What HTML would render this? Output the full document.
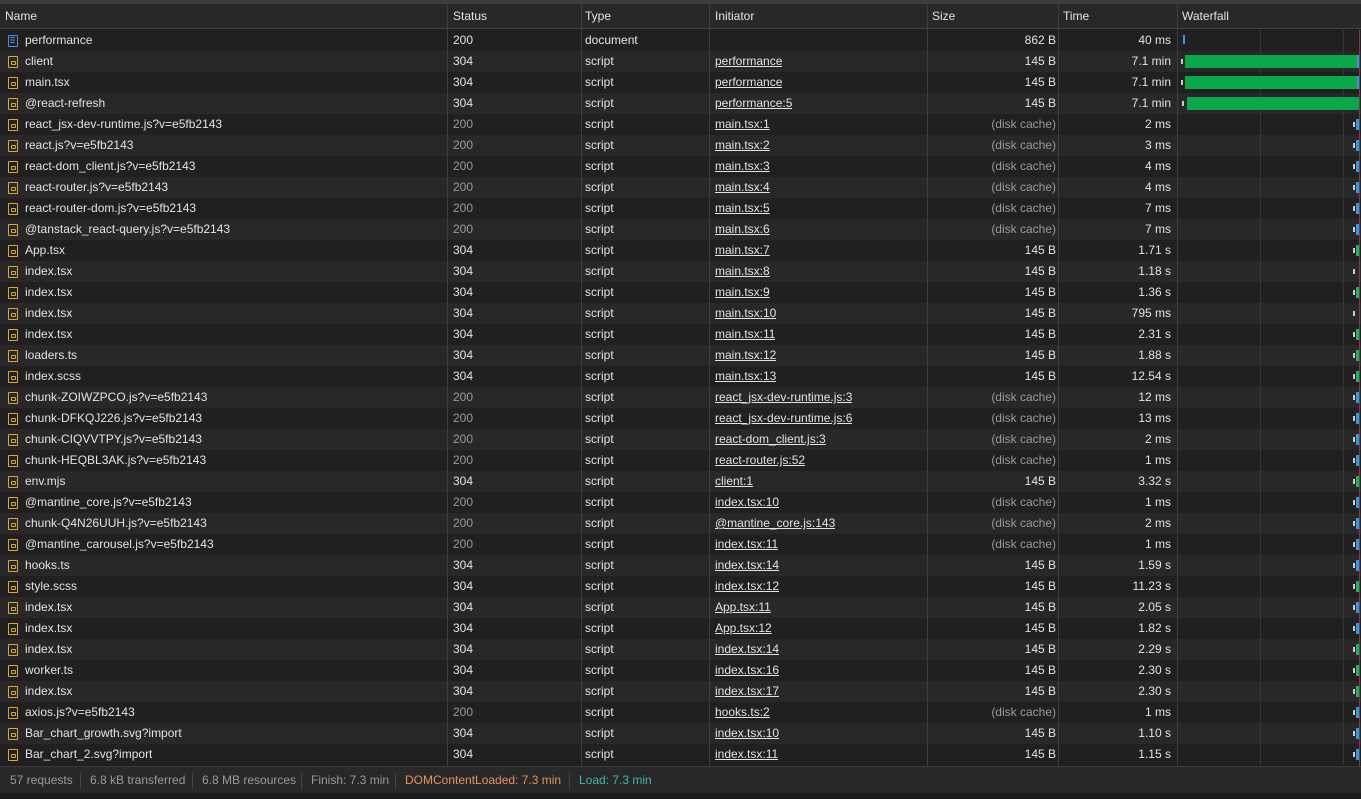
<!DOCTYPE html>
<html><head><meta charset="utf-8"><style>
*{margin:0;padding:0;box-sizing:border-box}
body{width:1361px;height:799px;background:#1b1b1b;font-family:"Liberation Sans",sans-serif;font-size:12px;color:#e3e3e3;overflow:hidden;position:relative}
.top{position:absolute;left:0;top:0;width:1361px;height:4px;background:#3c3c3c}
.hdr{position:absolute;left:0;top:4px;width:1361px;height:25px;background:#282828;border-bottom:1px solid #444}
.r{position:absolute;left:0;width:1361px;height:21px;line-height:21px;white-space:nowrap}
.r:nth-child(even){background:#282828}
.r:nth-child(odd){background:#202020}
.c{position:absolute;top:0;height:100%;overflow:hidden}
.n{left:25px}.s{left:453px}.t{left:585px}.i{left:715px;text-decoration:underline}.z{right:305px;text-align:right}.m{right:190px;text-align:right}
.g{color:#9a9a9a}
.ic{position:absolute;left:8px;top:5px;width:10px;height:12px;border:1.5px solid #d8a93a;border-radius:1px}
.ic:after{content:"";position:absolute;left:2px;top:4px;width:3px;height:2px;border:1px solid #d8a93a;border-radius:1px}
.doc{border-color:#4c8fe0}
.doc:after{border:none;left:1px;top:1px;width:5px;height:6px;background:repeating-linear-gradient(#4c8fe0 0 1px,transparent 1px 2.5px)}
.vl{position:absolute;top:4px;width:1px;height:762px;background:#3d3d3d}
.gl{position:absolute;top:0;width:1px;height:21px;background:#363636}
.tick{position:absolute;left:1353px;top:8px;width:2px;height:5px;background:#ccc}
.bar{position:absolute;left:1356px;top:5px;width:3px;height:11px;background:#2a9ce0}
.gb{background:#1db35a}
.H{position:absolute;top:4px;height:25px;line-height:25px;color:#e3e3e3}
.foot{position:absolute;left:0;top:766px;width:1361px;height:27px;background:#282828;border-top:1px solid #3d3d3d;line-height:27px;color:#9a9a9a}
.foot span{position:absolute;top:0}
.fs{position:absolute;top:6px;width:1px;height:16px;background:#444}
.r:before{content:"";position:absolute;left:1260px;top:0;width:1px;height:21px;background:#363636}
.r:after{content:"";position:absolute;left:1343px;top:0;width:1px;height:21px;background:#363636}
.r>*{z-index:1}
</style></head><body>
<div class="top"></div>
<div class="hdr"></div>
<div class="H" style="left:5px">Name</div>
<div class="H" style="left:453px">Status</div>
<div class="H" style="left:585px">Type</div>
<div class="H" style="left:715px">Initiator</div>
<div class="H" style="left:932px">Size</div>
<div class="H" style="left:1063px">Time</div>
<div class="H" style="left:1182px">Waterfall</div>
<div id="rows" style="position:absolute;left:0;top:30px">
<div class="r" style="top:0"><div class="ic doc"></div><div class="c n">performance</div><div class="c s">200</div><div class="c t">document</div><div class="c i"></div><div class="c z">862 B</div><div class="c m">40 ms</div><div style="position:absolute;left:1183px;top:5px;width:2px;height:9px;background:#2a9ce0"></div></div>
<div class="r" style="top:21px"><div class="ic"></div><div class="c n">client</div><div class="c s">304</div><div class="c t">script</div><div class="c i">performance</div><div class="c z">145 B</div><div class="c m">7.1 min</div><div style="position:absolute;left:1181px;top:8px;width:2px;height:5px;background:#ccc"></div><div style="position:absolute;left:1185px;top:4px;width:172px;height:13px;background:#0aa84a"></div><div style="position:absolute;left:1357px;top:4px;width:2px;height:13px;background:#2a9ce0"></div></div>
<div class="r" style="top:42px"><div class="ic"></div><div class="c n">main.tsx</div><div class="c s">304</div><div class="c t">script</div><div class="c i">performance</div><div class="c z">145 B</div><div class="c m">7.1 min</div><div style="position:absolute;left:1181px;top:8px;width:2px;height:5px;background:#ccc"></div><div style="position:absolute;left:1185px;top:4px;width:172px;height:13px;background:#0aa84a"></div><div style="position:absolute;left:1357px;top:4px;width:2px;height:13px;background:#2a9ce0"></div></div>
<div class="r" style="top:63px"><div class="ic"></div><div class="c n">@react-refresh</div><div class="c s">304</div><div class="c t">script</div><div class="c i">performance:5</div><div class="c z">145 B</div><div class="c m">7.1 min</div><div style="position:absolute;left:1182px;top:8px;width:2px;height:5px;background:#ccc"></div><div style="position:absolute;left:1187px;top:4px;width:172px;height:13px;background:#0aa84a"></div></div>
<div class="r" style="top:84px"><div class="ic"></div><div class="c n">react_jsx-dev-runtime.js?v=e5fb2143</div><div class="c s g">200</div><div class="c t">script</div><div class="c i">main.tsx:1</div><div class="c z g">(disk cache)</div><div class="c m">2 ms</div><div class="tick"></div><div class="bar"></div></div>
<div class="r" style="top:105px"><div class="ic"></div><div class="c n">react.js?v=e5fb2143</div><div class="c s g">200</div><div class="c t">script</div><div class="c i">main.tsx:2</div><div class="c z g">(disk cache)</div><div class="c m">3 ms</div><div class="tick"></div><div class="bar"></div></div>
<div class="r" style="top:126px"><div class="ic"></div><div class="c n">react-dom_client.js?v=e5fb2143</div><div class="c s g">200</div><div class="c t">script</div><div class="c i">main.tsx:3</div><div class="c z g">(disk cache)</div><div class="c m">4 ms</div><div class="tick"></div><div class="bar"></div></div>
<div class="r" style="top:147px"><div class="ic"></div><div class="c n">react-router.js?v=e5fb2143</div><div class="c s g">200</div><div class="c t">script</div><div class="c i">main.tsx:4</div><div class="c z g">(disk cache)</div><div class="c m">4 ms</div><div class="tick"></div><div class="bar"></div></div>
<div class="r" style="top:168px"><div class="ic"></div><div class="c n">react-router-dom.js?v=e5fb2143</div><div class="c s g">200</div><div class="c t">script</div><div class="c i">main.tsx:5</div><div class="c z g">(disk cache)</div><div class="c m">7 ms</div><div class="tick"></div><div class="bar"></div></div>
<div class="r" style="top:189px"><div class="ic"></div><div class="c n">@tanstack_react-query.js?v=e5fb2143</div><div class="c s g">200</div><div class="c t">script</div><div class="c i">main.tsx:6</div><div class="c z g">(disk cache)</div><div class="c m">7 ms</div><div class="tick"></div><div class="bar"></div></div>
<div class="r" style="top:210px"><div class="ic"></div><div class="c n">App.tsx</div><div class="c s">304</div><div class="c t">script</div><div class="c i">main.tsx:7</div><div class="c z">145 B</div><div class="c m">1.71 s</div><div class="tick"></div><div class="bar gb"></div></div>
<div class="r" style="top:231px"><div class="ic"></div><div class="c n">index.tsx</div><div class="c s">304</div><div class="c t">script</div><div class="c i">main.tsx:8</div><div class="c z">145 B</div><div class="c m">1.18 s</div><div class="tick"></div></div>
<div class="r" style="top:252px"><div class="ic"></div><div class="c n">index.tsx</div><div class="c s">304</div><div class="c t">script</div><div class="c i">main.tsx:9</div><div class="c z">145 B</div><div class="c m">1.36 s</div><div class="tick"></div><div class="bar gb"></div></div>
<div class="r" style="top:273px"><div class="ic"></div><div class="c n">index.tsx</div><div class="c s">304</div><div class="c t">script</div><div class="c i">main.tsx:10</div><div class="c z">145 B</div><div class="c m">795 ms</div><div class="tick"></div></div>
<div class="r" style="top:294px"><div class="ic"></div><div class="c n">index.tsx</div><div class="c s">304</div><div class="c t">script</div><div class="c i">main.tsx:11</div><div class="c z">145 B</div><div class="c m">2.31 s</div><div class="tick"></div><div class="bar gb"></div></div>
<div class="r" style="top:315px"><div class="ic"></div><div class="c n">loaders.ts</div><div class="c s">304</div><div class="c t">script</div><div class="c i">main.tsx:12</div><div class="c z">145 B</div><div class="c m">1.88 s</div><div class="tick"></div><div class="bar gb"></div></div>
<div class="r" style="top:336px"><div class="ic"></div><div class="c n">index.scss</div><div class="c s">304</div><div class="c t">script</div><div class="c i">main.tsx:13</div><div class="c z">145 B</div><div class="c m">12.54 s</div><div class="tick"></div><div class="bar gb"></div></div>
<div class="r" style="top:357px"><div class="ic"></div><div class="c n">chunk-ZOIWZPCO.js?v=e5fb2143</div><div class="c s g">200</div><div class="c t">script</div><div class="c i">react_jsx-dev-runtime.js:3</div><div class="c z g">(disk cache)</div><div class="c m">12 ms</div><div class="tick"></div><div class="bar"></div></div>
<div class="r" style="top:378px"><div class="ic"></div><div class="c n">chunk-DFKQJ226.js?v=e5fb2143</div><div class="c s g">200</div><div class="c t">script</div><div class="c i">react_jsx-dev-runtime.js:6</div><div class="c z g">(disk cache)</div><div class="c m">13 ms</div><div class="tick"></div><div class="bar"></div></div>
<div class="r" style="top:399px"><div class="ic"></div><div class="c n">chunk-CIQVVTPY.js?v=e5fb2143</div><div class="c s g">200</div><div class="c t">script</div><div class="c i">react-dom_client.js:3</div><div class="c z g">(disk cache)</div><div class="c m">2 ms</div><div class="tick"></div><div class="bar"></div></div>
<div class="r" style="top:420px"><div class="ic"></div><div class="c n">chunk-HEQBL3AK.js?v=e5fb2143</div><div class="c s g">200</div><div class="c t">script</div><div class="c i">react-router.js:52</div><div class="c z g">(disk cache)</div><div class="c m">1 ms</div><div class="tick"></div><div class="bar"></div></div>
<div class="r" style="top:441px"><div class="ic"></div><div class="c n">env.mjs</div><div class="c s">304</div><div class="c t">script</div><div class="c i">client:1</div><div class="c z">145 B</div><div class="c m">3.32 s</div><div class="tick"></div><div class="bar gb"></div></div>
<div class="r" style="top:462px"><div class="ic"></div><div class="c n">@mantine_core.js?v=e5fb2143</div><div class="c s g">200</div><div class="c t">script</div><div class="c i">index.tsx:10</div><div class="c z g">(disk cache)</div><div class="c m">1 ms</div><div class="tick"></div><div class="bar"></div></div>
<div class="r" style="top:483px"><div class="ic"></div><div class="c n">chunk-Q4N26UUH.js?v=e5fb2143</div><div class="c s g">200</div><div class="c t">script</div><div class="c i">@mantine_core.js:143</div><div class="c z g">(disk cache)</div><div class="c m">2 ms</div><div class="tick"></div><div class="bar"></div></div>
<div class="r" style="top:504px"><div class="ic"></div><div class="c n">@mantine_carousel.js?v=e5fb2143</div><div class="c s g">200</div><div class="c t">script</div><div class="c i">index.tsx:11</div><div class="c z g">(disk cache)</div><div class="c m">1 ms</div><div class="tick"></div><div class="bar"></div></div>
<div class="r" style="top:525px"><div class="ic"></div><div class="c n">hooks.ts</div><div class="c s">304</div><div class="c t">script</div><div class="c i">index.tsx:14</div><div class="c z">145 B</div><div class="c m">1.59 s</div><div class="tick"></div><div class="bar"></div></div>
<div class="r" style="top:546px"><div class="ic"></div><div class="c n">style.scss</div><div class="c s">304</div><div class="c t">script</div><div class="c i">index.tsx:12</div><div class="c z">145 B</div><div class="c m">11.23 s</div><div class="tick"></div><div class="bar gb"></div></div>
<div class="r" style="top:567px"><div class="ic"></div><div class="c n">index.tsx</div><div class="c s">304</div><div class="c t">script</div><div class="c i">App.tsx:11</div><div class="c z">145 B</div><div class="c m">2.05 s</div><div class="tick"></div><div class="bar"></div></div>
<div class="r" style="top:588px"><div class="ic"></div><div class="c n">index.tsx</div><div class="c s">304</div><div class="c t">script</div><div class="c i">App.tsx:12</div><div class="c z">145 B</div><div class="c m">1.82 s</div><div class="tick"></div><div class="bar"></div></div>
<div class="r" style="top:609px"><div class="ic"></div><div class="c n">index.tsx</div><div class="c s">304</div><div class="c t">script</div><div class="c i">index.tsx:14</div><div class="c z">145 B</div><div class="c m">2.29 s</div><div class="tick"></div><div class="bar gb"></div></div>
<div class="r" style="top:630px"><div class="ic"></div><div class="c n">worker.ts</div><div class="c s">304</div><div class="c t">script</div><div class="c i">index.tsx:16</div><div class="c z">145 B</div><div class="c m">2.30 s</div><div class="tick"></div><div class="bar gb"></div></div>
<div class="r" style="top:651px"><div class="ic"></div><div class="c n">index.tsx</div><div class="c s">304</div><div class="c t">script</div><div class="c i">index.tsx:17</div><div class="c z">145 B</div><div class="c m">2.30 s</div><div class="tick"></div><div class="bar gb"></div></div>
<div class="r" style="top:672px"><div class="ic"></div><div class="c n">axios.js?v=e5fb2143</div><div class="c s g">200</div><div class="c t">script</div><div class="c i">hooks.ts:2</div><div class="c z g">(disk cache)</div><div class="c m">1 ms</div><div class="tick"></div><div class="bar"></div></div>
<div class="r" style="top:693px"><div class="ic"></div><div class="c n">Bar_chart_growth.svg?import</div><div class="c s">304</div><div class="c t">script</div><div class="c i">index.tsx:10</div><div class="c z">145 B</div><div class="c m">1.10 s</div><div class="tick"></div><div class="bar"></div></div>
<div class="r" style="top:714px"><div class="ic"></div><div class="c n">Bar_chart_2.svg?import</div><div class="c s">304</div><div class="c t">script</div><div class="c i">index.tsx:11</div><div class="c z">145 B</div><div class="c m">1.15 s</div><div class="tick"></div><div class="bar"></div></div>
</div>
<div style="position:absolute;left:1359px;top:30px;width:1px;height:736px;background:#7a3b4a"></div>
<div class="vl" style="left:447px"></div>
<div class="vl" style="left:581px"></div>
<div class="vl" style="left:709px"></div>
<div class="vl" style="left:927px"></div>
<div class="vl" style="left:1058px"></div>
<div class="vl" style="left:1177px"></div>
<div class="foot">
<span style="left:10px">57 requests</span><div class="fs" style="left:80px"></div>
<span style="left:90px">6.8 kB transferred</span><div class="fs" style="left:192px"></div>
<span style="left:202px">6.8 MB resources</span><div class="fs" style="left:301px"></div>
<span style="left:311px">Finish: 7.3 min</span><div class="fs" style="left:395px"></div>
<span style="left:405px;color:#e8925a">DOMContentLoaded: 7.3 min</span><div class="fs" style="left:569px"></div>
<span style="left:579px;color:#3fb8b0">Load: 7.3 min</span>
</div>
</body></html>
